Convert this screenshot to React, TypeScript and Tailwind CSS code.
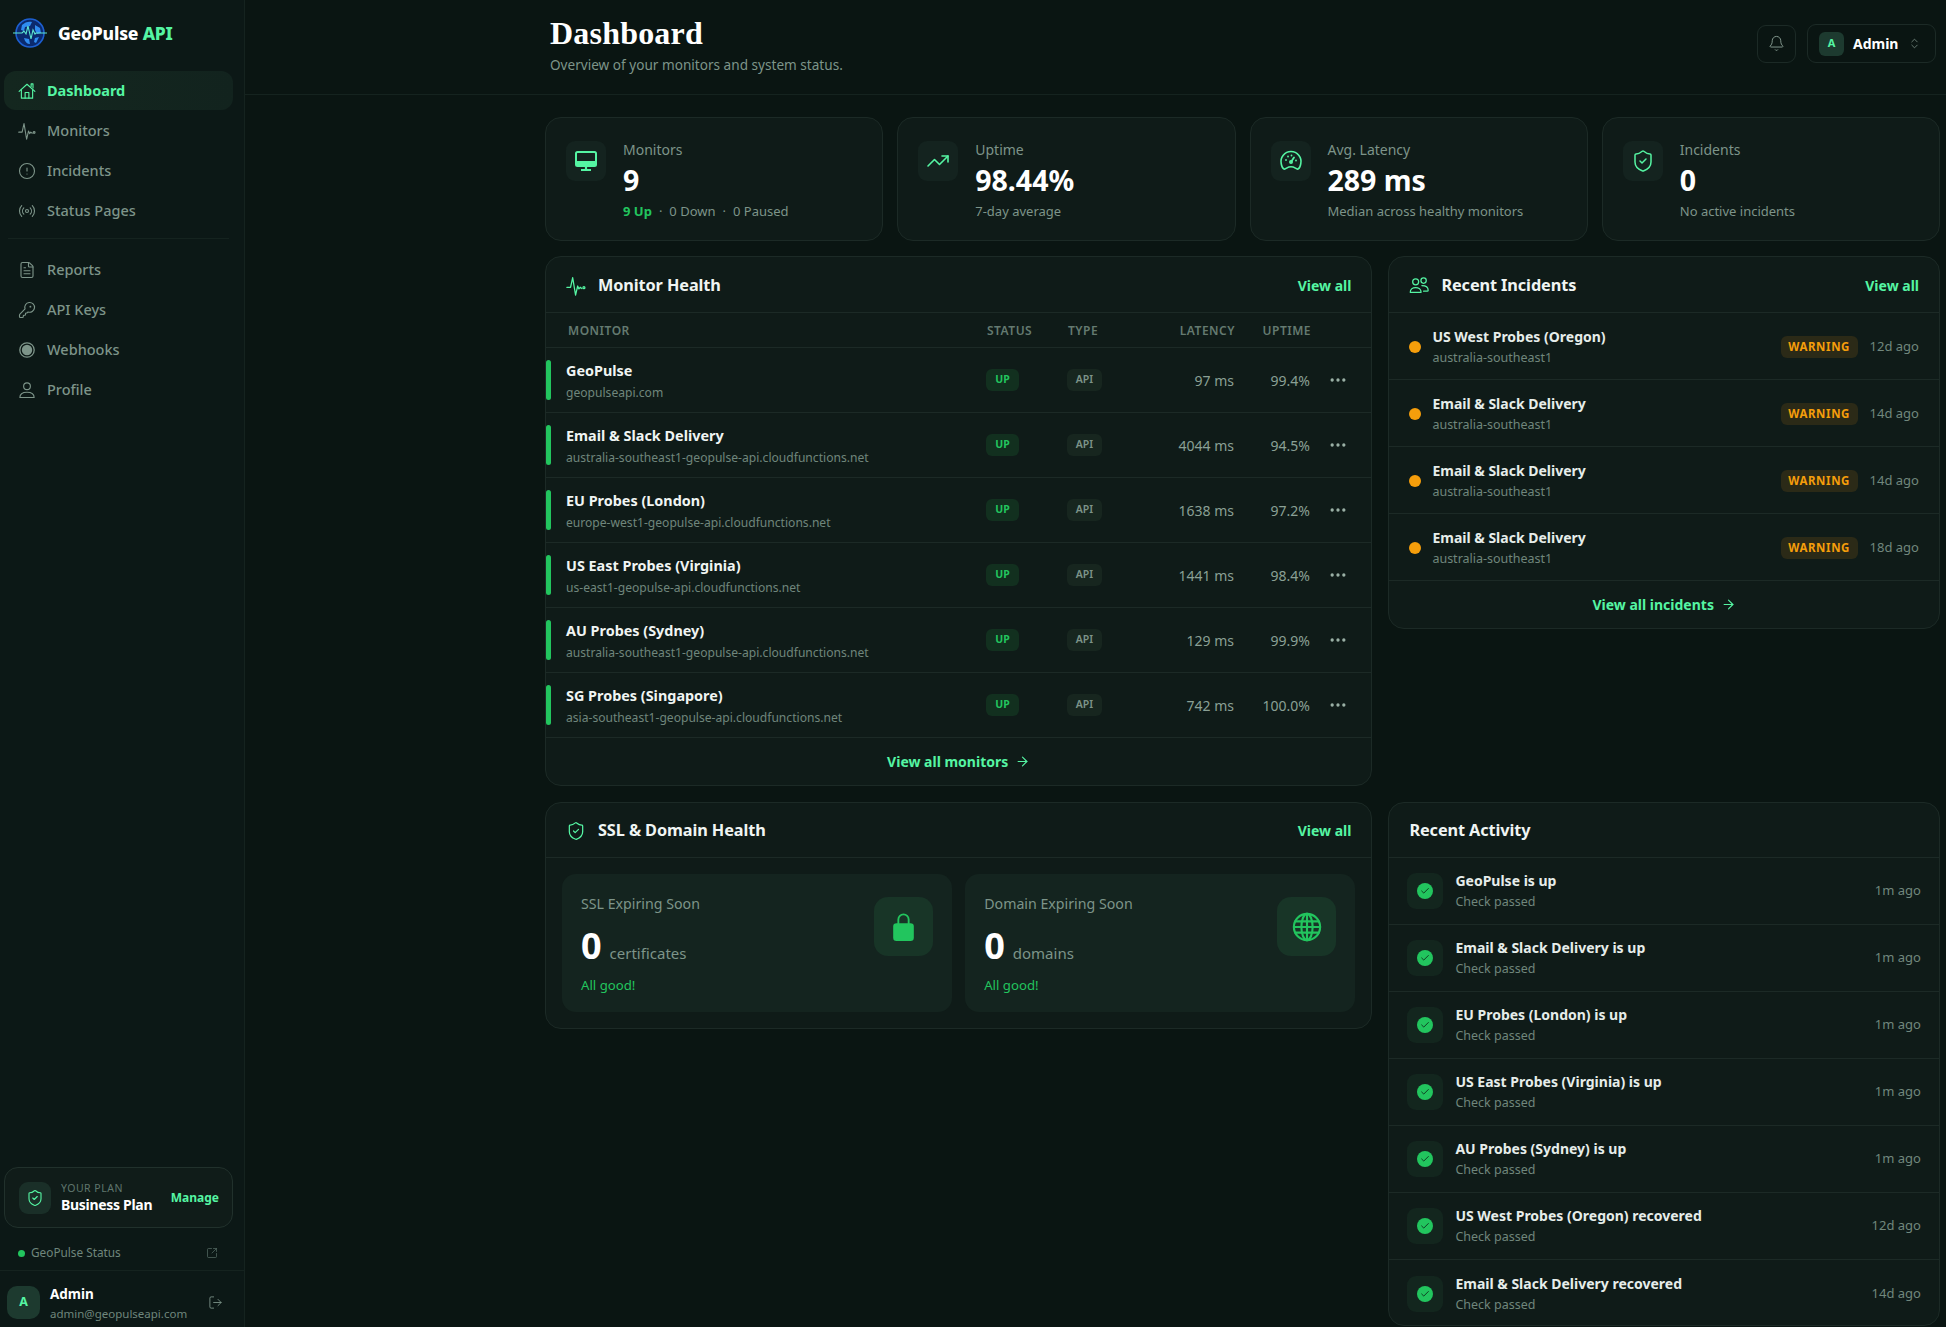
import React from "react";
import {
  CircleAlert, Radio, FileText, KeyRound, ShieldCheck, SquareArrowOutUpRight, LogOut,
  ChevronsUpDown, Bell, TrendingUp, ArrowRight, Ellipsis, Check,
} from "lucide-react";

type IconProps = { size?: number; strokeWidth?: number; className?: string; color?: string };

function Line({ size = 18, strokeWidth = 1.5, className, color = "currentColor", children }: IconProps & { children: React.ReactNode }) {
  return (
    <svg width={size} height={size} viewBox="0 0 24 24" fill="none" stroke={color} strokeWidth={strokeWidth} strokeLinecap="round" strokeLinejoin="round" className={className}>
      {children}
    </svg>
  );
}

const HouseIcon = (p: IconProps) => (
  <Line {...p}>
    <path d="M1.5 12.5 12 3l10.5 9.5" />
    <path d="M4.5 10.5V21.5h15V10.5" />
    <path d="M9.5 21.5v-7.5h5v7.5" />
    <path d="M17.5 6V2.5h2.5V8" />
  </Line>
);
const PulseIcon = (p: IconProps) => (
  <Line {...p}>
    <path d="M1 13.5h4.5L8 2l3.5 21 2.5-11 1.5 3.5 1.5-2 2 1.5" />
    <circle cx="21.5" cy="14" r="1.2" />
  </Line>
);
const UserIcon = (p: IconProps) => (
  <Line {...p}>
    <circle cx="12" cy="7" r="4.5" />
    <path d="M2.5 22c0-4.5 4-7 9.5-7s9.5 2.5 9.5 7z" />
  </Line>
);
const UsersIcon = (p: IconProps) => (
  <Line {...p}>
    <circle cx="8" cy="7" r="3.6" />
    <circle cx="17.5" cy="5.5" r="3.2" />
    <path d="M1.5 19.5c0-3.5 3-5.5 6.5-5.5s6.5 2 6.5 5.5z" />
    <path d="M15.5 11.5c4 0 7.5 1.5 7.5 5.5 0 .8-.5 1.2-1.2 1.2h-4.3" />
  </Line>
);
const GlobeIcon = (p: IconProps) => (
  <Line {...p}>
    <circle cx="12" cy="12" r="10.5" />
    <ellipse cx="12" cy="12" rx="4.5" ry="10.5" />
    <path d="M12 1.5v21M2.5 7.5h19M1.5 12h21M2.5 16.5h19" />
  </Line>
);

function Logo() {
  return (
    <svg width="36" height="34" viewBox="0 0 36 34" className="shrink-0">
      <circle cx="18" cy="17" r="14" fill="#0b2a6e" stroke="#1d5fd0" strokeWidth="1.6" />
      <path d="M10 9c3-3 7-4 10-3l-2 4-5 1-1 4-3-1zM23 9l5 3 1 5-4 1-2-4zM12 22l5 1 1 5c-3 0-5-2-6-6zM23 22l4-1-3 6-2-1z" fill="#2f8cf0" />
      <path d="M1 17h9l2-2 2 3 2-8 3 13 2-9 2 4 1-1h11" fill="none" stroke="#5ee6d0" strokeWidth="1.1" />
    </svg>
  );
}

function WebhookIcon() {
  return (
    <svg width="18" height="18" viewBox="0 0 18 18" className="shrink-0 text-[#7d9489]">
      <circle cx="9" cy="9" r="7.2" fill="none" stroke="currentColor" strokeWidth="1.3" />
      <circle cx="9" cy="9" r="5.2" fill="currentColor" />
    </svg>
  );
}

function MonitorSolid() {
  return (
    <svg width="24" height="24" viewBox="0 0 24 24" fill="none" stroke="#55f5a3" strokeWidth="2" strokeLinejoin="round">
      <rect x="2" y="3" width="20" height="14" rx="1.5" />
      <path d="M2 14h20" strokeWidth="4" />
      <path d="M12 17v3M7 21h10" strokeWidth="2.2" />
    </svg>
  );
}

function GaugeIcon() {
  return (
    <svg width="24" height="24" viewBox="0 0 24 24" fill="none" stroke="#55f5a3" strokeWidth="1.6" strokeLinecap="round" strokeLinejoin="round">
      <path d="M12 2.5a10 10 0 0 1 9.8 12c-.4 2.5-1.3 4.8-2.8 5.5-1 .5-2-.5-3-1.2-1.2-.8-2.6-1.1-4-1.1s-2.8.3-4 1.1c-1 .7-2 1.7-3 1.2-1.5-.7-2.4-3-2.8-5.5A10 10 0 0 1 12 2.5z" />
      <path d="M12 13l3-4.5M7 11h.01M9 7.5h.01M12.5 6.5h.01M17 11.5h.01" strokeWidth="1.8" />
      <circle cx="12" cy="13" r="1.2" />
    </svg>
  );
}

function LockSolid() {
  return (
    <svg width="23" height="30" viewBox="0 0 24 32" fill="none">
      <path d="M6.5 13V8a5.5 5.5 0 0 1 11 0v5" stroke="#22c55e" strokeWidth="2" />
      <rect x="1" y="12" width="22" height="19" rx="3.5" fill="#22c55e" />
    </svg>
  );
}

function CheckBadge() {
  return (
    <div className="w-4 h-4 rounded-full bg-[#22c55e] flex items-center justify-center">
      <Check size={10} strokeWidth={2} color="#0c2417" />
    </div>
  );
}

const nav1 = [
  { label: "Dashboard", Icon: HouseIcon, active: true },
  { label: "Monitors", Icon: PulseIcon },
  { label: "Incidents", Icon: CircleAlert },
  { label: "Status Pages", Icon: Radio },
];
const nav2 = [
  { label: "Reports", Icon: FileText },
  { label: "API Keys", Icon: KeyRound },
  { label: "Webhooks", Icon: null },
  { label: "Profile", Icon: UserIcon },
];

function NavItem({ label, Icon, active }: { label: string; Icon: any; active?: boolean }) {
  return (
    <div className={"h-[39px] mb-px flex items-center gap-[11px] pl-[14px] rounded-[12px] text-[14.5px] " + (active ? "bg-gradient-to-r from-[#14271f] to-[#12231e] text-[#55f5a3] font-bold" : "text-[#7d9489] font-medium")}>
      {Icon ? <Icon size={18} strokeWidth={1.5} className="shrink-0" /> : <WebhookIcon />}
      <span>{label}</span>
    </div>
  );
}

function Sidebar() {
  return (
    <aside className="w-[245px] shrink-0 h-full bg-[#0c1816] border-r border-[#15231f] flex flex-col">
      <div className="h-[71px] flex items-center gap-[10px] pl-[12px] pb-[5px]">
        <Logo />
        <span className="text-[17.5px] font-extrabold text-white tracking-[-0.2px]">GeoPulse <span className="text-[#55f5a3]">API</span></span>
      </div>
      <nav className="px-[4px] w-[237px]">
        {nav1.map((n) => <NavItem key={n.label} {...n} />)}
        <div className="h-px bg-[#15231f] mx-[4px] mt-[8px] mb-[11px]" />
        {nav2.map((n) => <NavItem key={n.label} {...n} />)}
      </nav>
      <div className="mt-auto mx-[4px] w-[229px] h-[61px] rounded-[14px] border border-[#21312c] bg-[#101c19] flex items-center pl-[14px] pr-[13px]">
        <div className="w-8 h-8 rounded-[9px] bg-[#1a2f28] flex items-center justify-center">
          <ShieldCheck size={18} strokeWidth={1.5} color="#55f5a3" />
        </div>
        <div className="ml-[10px] flex-1">
          <div className="text-[10.5px] leading-[14px] tracking-[0.5px] text-[#5f766d]">YOUR PLAN</div>
          <div className="text-[14px] leading-[20px] font-bold text-white tracking-[-0.3px]">Business Plan</div>
        </div>
        <span className="text-[12px] font-bold text-[#55f5a3]">Manage</span>
      </div>
      <div className="h-[43px] flex items-center pl-[18px] pr-[26px] pt-[8px] text-[11.8px] text-[#6f867c] border-b border-[#15231f]">
        <span className="w-[7px] h-[7px] rounded-full bg-[#22c55e]" />
        <span className="ml-[6px] flex-1">GeoPulse Status</span>
        <SquareArrowOutUpRight size={12} strokeWidth={1.3} className="text-[#5f766d]" />
      </div>
      <div className="h-[56px] flex items-center pl-[7px] pr-[21px] pt-[7px]">
        <div className="w-[33px] h-[33px] rounded-[10px] bg-[#1d3a2f] flex items-center justify-center text-[#55f5a3] text-[12.5px] font-bold">A</div>
        <div className="ml-[10px] flex-1 pt-[2px]">
          <div className="text-[13.5px] leading-[19px] font-bold text-white">Admin</div>
          <div className="text-[11.5px] leading-[19px] text-[#6f867c]">admin@geopulseapi.com</div>
        </div>
        <LogOut size={15} strokeWidth={1.4} className="text-[#7d9489]" />
      </div>
    </aside>
  );
}

function Header() {
  return (
    <header className="h-[95px] border-b border-[#15231f] flex items-start pl-[305px] pr-[10px]">
      <div className="pt-[13px]">
        <h1 className="font-['Liberation_Serif'] text-[32px] tracking-[0.2px] leading-[40px] font-bold text-white">Dashboard</h1>
        <p className="text-[13.6px] leading-[20px] text-[#7d9489] mt-[2px]">Overview of your monitors and system status.</p>
      </div>
      <div className="ml-auto flex items-center gap-[11px] pt-[24px]">
        <div className="w-[39px] h-[38px] rounded-[9px] border border-[#1c2a26] flex items-center justify-center">
          <Bell size={17} strokeWidth={1.3} className="text-[#8aa095]" />
        </div>
        <div className="w-[129px] h-[39px] rounded-[9px] border border-[#1c2a26] flex items-center pl-[11px]">
          <div className="w-[25px] h-[24px] rounded-[6px] bg-[#1d3a2f] flex items-center justify-center text-[#55f5a3] text-[11px] font-bold">A</div>
          <span className="ml-[9px] text-[14px] font-bold text-white">Admin</span>
          <ChevronsUpDown size={13} strokeWidth={1.3} className="ml-[10px] text-[#8aa095]" />
        </div>
      </div>
    </header>
  );
}

function Stat({ icon, label, value, sub }: { icon: React.ReactNode; label: string; value: string; sub: React.ReactNode }) {
  return (
    <div className="h-[124px] rounded-[16px] border border-[#1c2a26] bg-[#0f1b18] flex pl-[20px] pt-[23px]">
      <div className="w-10 h-10 rounded-[9px] bg-[#14231f] flex items-center justify-center shrink-0">{icon}</div>
      <div className="ml-[17px] -mt-px">
        <div className="text-[14px] leading-[20px] text-[#7d9489]">{label}</div>
        <div className="text-[28.5px] leading-[36px] font-bold text-white mt-[2px]">{value}</div>
        <div className="text-[13px] leading-[18px] text-[#7d9489] mt-[4px]">{sub}</div>
      </div>
    </div>
  );
}

const monitors = [
  ["GeoPulse", "geopulseapi.com", "97 ms", "99.4%"],
  ["Email & Slack Delivery", "australia-southeast1-geopulse-api.cloudfunctions.net", "4044 ms", "94.5%"],
  ["EU Probes (London)", "europe-west1-geopulse-api.cloudfunctions.net", "1638 ms", "97.2%"],
  ["US East Probes (Virginia)", "us-east1-geopulse-api.cloudfunctions.net", "1441 ms", "98.4%"],
  ["AU Probes (Sydney)", "australia-southeast1-geopulse-api.cloudfunctions.net", "129 ms", "99.9%"],
  ["SG Probes (Singapore)", "asia-southeast1-geopulse-api.cloudfunctions.net", "742 ms", "100.0%"],
];

const incidents = [
  ["US West Probes (Oregon)", "12d ago"],
  ["Email & Slack Delivery", "14d ago"],
  ["Email & Slack Delivery", "14d ago"],
  ["Email & Slack Delivery", "18d ago"],
];

const activity = [
  ["GeoPulse is up", "1m ago"],
  ["Email & Slack Delivery is up", "1m ago"],
  ["EU Probes (London) is up", "1m ago"],
  ["US East Probes (Virginia) is up", "1m ago"],
  ["AU Probes (Sydney) is up", "1m ago"],
  ["US West Probes (Oregon) recovered", "12d ago"],
  ["Email & Slack Delivery recovered", "14d ago"],
];

function Card({ children }: { children: React.ReactNode }) {
  return <section className="rounded-[16px] border border-[#1c2a26] bg-[#0f1b18] overflow-hidden">{children}</section>;
}

function CardHead({ icon, title, link = true, tall = false, pad = "pt-[2px]" }: { icon?: React.ReactNode; title: string; link?: boolean; tall?: boolean; pad?: string }) {
  return (
    <div className={"border-b border-[#1c2a26] flex items-center pl-[20px] pr-[20px] " + pad + " " + (tall ? "h-[56px]" : "h-[55px]")}>
      {icon}
      <h2 className={"text-[16.3px] font-bold text-[#f0f5f3] tracking-[-0.1px] " + (icon ? "ml-[12px]" : "")}>{title}</h2>
      {link && <span className="ml-auto text-[14px] font-bold text-[#55f5a3]">View all</span>}
    </div>
  );
}

function Foot({ label, h }: { label: string; h: string }) {
  return (
    <div className={"flex items-center justify-center gap-[7px] text-[14px] font-bold text-[#55f5a3] " + h}>
      {label} <ArrowRight size={15} strokeWidth={1.8} />
    </div>
  );
}

const gridCols = "grid grid-cols-[420px_81px_60px_107px_76px_1fr] items-center";

function MonitorHealth() {
  return (
    <Card>
      <CardHead tall icon={<PulseIcon size={20} strokeWidth={1.5} color="#55f5a3" />} title="Monitor Health" />
      <div className={gridCols + " h-[35px] pl-[21px] pt-px border-b border-[#1c2a26] text-[12px] font-semibold tracking-[0.5px] text-[#647a70]"}>
        <span className="pl-[1px]">MONITOR</span>
        <span>STATUS</span>
        <span>TYPE</span>
        <span className="text-right">LATENCY</span>
        <span className="text-right">UPTIME</span>
        <span />
      </div>
      {monitors.map(([name, url, lat, up]) => (
        <div key={name + url} className="h-[65px] border-b border-[#1c2a26] flex items-center">
          <div className="w-[5px] h-10 rounded-[3px] bg-[#22c55e] shrink-0" />
          <div className={gridCols + " flex-1 pl-[15px]"}>
            <div className="pt-[3px]">
              <div className="text-[14.4px] leading-[20px] font-bold text-[#f0f5f3]">{name}</div>
              <div className="text-[12.1px] leading-[18px] mt-[3px] text-[#6f867c]">{url}</div>
            </div>
            <div className="flex"><span className="flex items-center justify-center w-[33px] h-[22px] rounded-[6px] bg-[#12301f] text-[#22c55e] text-[10.5px] font-bold">UP</span></div>
            <div className="flex"><span className="flex items-center justify-center w-[35px] h-[22px] rounded-[6px] bg-[#17261f] text-[#7d9489] text-[10.5px] font-semibold">API</span></div>
            <div className="text-right text-[14px] text-[#8aa095]">{lat}</div>
            <div className="text-right text-[14px] text-[#8aa095]">{up}</div>
            <div className="pl-[18px]"><Ellipsis size={20} strokeWidth={2} className="text-[#9ab0a5]" /></div>
          </div>
        </div>
      ))}
      <Foot label="View all monitors" h="h-[47px]" />
    </Card>
  );
}

function Incidents() {
  return (
    <Card>
      <CardHead tall icon={<UsersIcon size={20} strokeWidth={1.5} color="#55f5a3" />} title="Recent Incidents" />
      {incidents.map(([name, time], i) => (
        <div key={i} className="h-[67px] border-b border-[#1c2a26] flex items-center pl-[20px] pr-[20px] pt-px">
          <span className="w-3 h-3 rounded-full bg-[#f59e0b] shrink-0" />
          <div className="ml-[11px] flex-1">
            <div className="text-[14px] leading-[20px] font-bold text-[#e6edea]">{name}</div>
            <div className="text-[12.5px] leading-[18px] mt-[2px] text-[#6f867c]">australia-southeast1</div>
          </div>
          <span className="w-[77px] h-[22px] rounded-[6px] bg-[#2b2a17] flex items-center justify-center text-[11.5px] font-bold tracking-[0.6px] text-[#f59e0b]">WARNING</span>
          <span className="ml-[12px] text-[13px] text-[#71877d]">{time}</span>
        </div>
      ))}
      <Foot label="View all incidents" h="h-[47px]" />
    </Card>
  );
}

function Ssl() {
  const items = [
    { label: "SSL Expiring Soon", unit: "certificates", icon: <LockSolid /> },
    { label: "Domain Expiring Soon", unit: "domains", icon: <GlobeIcon size={30} strokeWidth={1.7} color="#22c55e" /> },
  ];
  return (
    <Card>
      <CardHead pad="pt-[1px]" icon={<ShieldCheck size={20} strokeWidth={1.5} color="#55f5a3" />} title="SSL & Domain Health" />
      <div className="grid grid-cols-2 gap-[13px] pt-[16px] px-[16px] pb-[16px]">
        {items.map((it) => (
          <div key={it.label} className="h-[138px] rounded-[14px] bg-[#14241f] flex justify-between pl-[19px] pr-[19px] pt-[20px]">
            <div>
              <div className="text-[14.2px] leading-[20px] text-[#7d9489]">{it.label}</div>
              <div className="flex items-baseline gap-[8px] mt-[10px]">
                <span className="text-[36px] leading-[44px] font-bold text-white">0</span>
                <span className="text-[15px] text-[#7d9489]">{it.unit}</span>
              </div>
              <div className="text-[13.2px] leading-[18px] mt-[8px] text-[#22c55e]">All good!</div>
            </div>
            <div className="w-[59px] h-[59px] mt-[3px] rounded-[14px] bg-[#183527] flex items-center justify-center">{it.icon}</div>
          </div>
        ))}
      </div>
    </Card>
  );
}

function RecentActivity() {
  return (
    <Card>
      <CardHead pad="pt-0" title="Recent Activity" link={false} />
      {activity.map(([name, time], i) => (
        <div key={i} className={"flex items-center pl-[18px] pr-[18px] " + (i < 6 ? "h-[67px] border-b border-[#1c2a26]" : "h-[65px] pt-[3px]")}>
          <div className="w-9 h-9 rounded-[9px] bg-[#13261e] flex items-center justify-center shrink-0"><CheckBadge /></div>
          <div className="ml-[12px] flex-1">
            <div className="text-[14px] leading-[20px] font-bold text-[#e6edea]">{name}</div>
            <div className="text-[12.5px] leading-[18px] mt-[2px] text-[#6f867c]">Check passed</div>
          </div>
          <span className="text-[13px] text-[#71877d]">{time}</span>
        </div>
      ))}
    </Card>
  );
}

export default function App() {
  return (
    <div className="h-[1327px] w-full overflow-hidden flex bg-[#0a1512] font-['Noto_Sans',sans-serif]">
      <Sidebar />
      <main className="flex-1 min-w-0">
        <Header />
        <div className="pl-[300px] pr-[6px] pt-[22px]">
          <div className="grid grid-cols-4 gap-[14px]">
            <Stat icon={<MonitorSolid />} label="Monitors" value="9" sub={<><span className="text-[#22c55e] font-bold">9 Up</span><span className="mx-[7px]">·</span>0 Down<span className="mx-[7px]">·</span>0 Paused</>} />
            <Stat icon={<TrendingUp size={24} strokeWidth={1.6} color="#55f5a3" />} label="Uptime" value="98.44%" sub="7-day average" />
            <Stat icon={<GaugeIcon />} label="Avg. Latency" value="289 ms" sub="Median across healthy monitors" />
            <Stat icon={<ShieldCheck size={24} strokeWidth={1.5} color="#55f5a3" />} label="Incidents" value="0" sub="No active incidents" />
          </div>
          <div className="grid grid-cols-[3fr_2fr] gap-4 items-start mt-[15px]">
            <MonitorHealth />
            <Incidents />
            <Ssl />
            <RecentActivity />
          </div>
        </div>
      </main>
    </div>
  );
}
